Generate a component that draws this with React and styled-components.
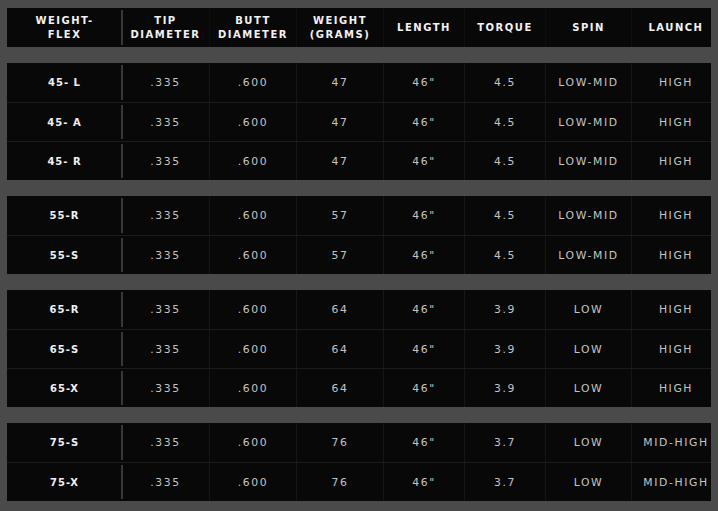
import styled, { createGlobalStyle } from "styled-components";

const columns = "115px 88px 87px 87px 81px 81px 86px 79px";

const headers = [
  ["WEIGHT-", "FLEX"],
  ["TIP", "DIAMETER"],
  ["BUTT", "DIAMETER"],
  ["WEIGHT", "(GRAMS)"],
  ["LENGTH"],
  ["TORQUE"],
  ["SPIN"],
  ["LAUNCH"],
];

const groups = [
  [
    ["45- L", ".335", ".600", "47", "46\"", "4.5", "LOW-MID", "HIGH"],
    ["45- A", ".335", ".600", "47", "46\"", "4.5", "LOW-MID", "HIGH"],
    ["45- R", ".335", ".600", "47", "46\"", "4.5", "LOW-MID", "HIGH"],
  ],
  [
    ["55-R", ".335", ".600", "57", "46\"", "4.5", "LOW-MID", "HIGH"],
    ["55-S", ".335", ".600", "57", "46\"", "4.5", "LOW-MID", "HIGH"],
  ],
  [
    ["65-R", ".335", ".600", "64", "46\"", "3.9", "LOW", "HIGH"],
    ["65-S", ".335", ".600", "64", "46\"", "3.9", "LOW", "HIGH"],
    ["65-X", ".335", ".600", "64", "46\"", "3.9", "LOW", "HIGH"],
  ],
  [
    ["75-S", ".335", ".600", "76", "46\"", "3.7", "LOW", "MID-HIGH"],
    ["75-X", ".335", ".600", "76", "46\"", "3.7", "LOW", "MID-HIGH"],
  ],
];

const App = () => {
  return (
    <>
      <GlobalStyle />
      <Page>
        <Block>
          <Row>
            {headers.map((lines, i) => (
              <HeadCell key={i} $first={i === 0}>
                {lines.map((l) => (
                  <span key={l}>{l}</span>
                ))}
              </HeadCell>
            ))}
          </Row>
        </Block>
        {groups.map((rows, g) => (
          <Block key={g}>
            {rows.map((row, r) => (
              <Row key={r} $divided={r > 0}>
                {row.map((val, c) =>
                  c === 0 ? (
                    <LabelCell key={c} $first>
                      {val}
                    </LabelCell>
                  ) : (
                    <Cell key={c}>{val}</Cell>
                  )
                )}
              </Row>
            ))}
          </Block>
        ))}
      </Page>
    </>
  );
};

export default App;

const GlobalStyle = createGlobalStyle`
  html, body {
    margin: 0;
    background: #4a4a4a;
  }
`;

const Page = styled.div`
  display: flex;
  flex-direction: column;
  gap: 16px;
  padding: 8px 7px 10px;
  font-family: "DejaVu Sans", "Noto Sans", sans-serif;
`;

const Block = styled.div`
  background: #080808;
  display: flex;
  flex-direction: column;
`;

const Row = styled.div`
  display: grid;
  grid-template-columns: ${columns};
  height: ${(p) => (p.$divided ? "38px" : "39px")};
  border-top: ${(p) => (p.$divided ? "1px solid #1c1c1c" : "none")};
`;

const BaseCell = styled.div`
  position: relative;
  display: flex;
  align-items: center;
  justify-content: center;
  text-align: center;
  border-right: 1px solid #161616;
  &:last-child {
    border-right: none;
    padding-left: 9px;
  }
  ${(p) =>
    p.$first &&
    `
    border-right: none;
    &::after {
      content: "";
      position: absolute;
      right: -1px;
      top: 2px;
      bottom: 2px;
      width: 2px;
      background: #383838;
    }
  `}
`;

const HeadCell = styled(BaseCell)`
  flex-direction: column;
  color: #f2f2f2;
  font-weight: 700;
  font-size: 10px;
  line-height: 14px;
  letter-spacing: 1.5px;
  border-right-color: #0f0f0f;
`;

const LabelCell = styled(BaseCell)`
  color: #f0f0f0;
  font-weight: 700;
  font-size: 10px;
  letter-spacing: 1px;
`;

const Cell = styled(BaseCell)`
  color: #c4c4c4;
  font-weight: 400;
  font-size: 10.8px;
  letter-spacing: 1.6px;
`;
